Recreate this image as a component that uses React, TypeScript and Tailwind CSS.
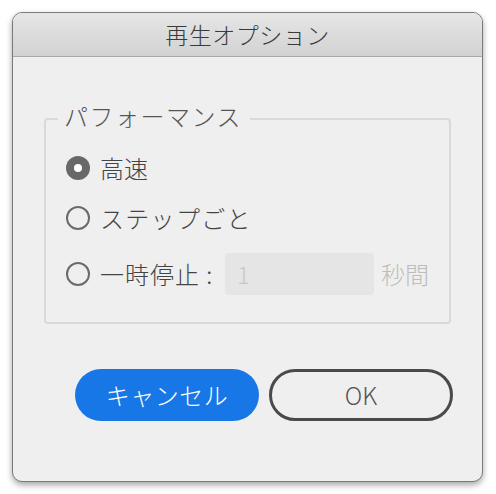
const font = { fontFamily: '"Noto Sans CJK JP", "Noto Sans", sans-serif' }

function Radio({ checked }: { checked?: boolean }) {
  if (checked) {
    return (
      <span className="flex h-[24px] w-[24px] shrink-0 items-center justify-center rounded-full bg-[#686868]">
        <span className="h-[8px] w-[8px] rounded-full bg-white" />
      </span>
    )
  }
  return <span className="h-[24px] w-[24px] shrink-0 rounded-full border-2 border-[#6a6a6a]" />
}

export default function App() {
  return (
    <div className="h-[494px] w-[496px] bg-white p-[12px] pr-[13px] font-light" style={font}>
      <div className="flex h-[470px] w-[471px] flex-col overflow-hidden rounded-[10px] border border-[#7a7a7a] bg-[#efefef] shadow-[0_3px_6px_rgba(0,0,0,0.35)]">
        <header className="flex h-[44px] shrink-0 items-center justify-center border-b border-[#a9a9a9] bg-gradient-to-b from-[#e6e6e6] to-[#d2d2d2]">
          <h1 className="text-[23px] leading-none tracking-[0.5px] text-[#3a3a3a]">再生オプション</h1>
        </header>

        <fieldset className="mx-[31px] mt-[48px] h-[219px] rounded-[4px] border-2 border-[#d9d9d9] px-[20px] pt-0">
          <legend className="-ml-[8px] -translate-y-[3px] pl-[6px] pr-[8px] text-[24px] leading-[28px] tracking-[1.5px] text-[#555]">パフォーマンス</legend>
          <div className="mt-[20px] flex h-[30px] items-center gap-[10px]">
            <Radio checked />
            <span className="text-[24px] text-[#444]">高速</span>
          </div>
          <div className="mt-[20px] flex h-[30px] items-center gap-[10px]">
            <Radio />
            <span className="text-[24px] tracking-[1.3px] text-[#444]">ステップごと</span>
          </div>
          <div className="mt-[20px] flex h-[42px] items-center">
            <Radio />
            <span className="ml-[10px] w-[117px] whitespace-nowrap text-[24px] tracking-[1px] text-[#444]">一時停止 :</span>
            <span className="ml-[8px] flex h-[42px] w-[149px] items-center rounded-[4px] bg-[#e5e5e5] px-[12px] text-[24px] text-[#c8c8c8]">1</span>
            <span className="ml-[7px] text-[24px] text-[#bdbdbd]">秒間</span>
          </div>
        </fieldset>

        <div className="mt-[45px] flex gap-[10px] pl-[62px]">
          <button className="h-[52px] w-[184px] rounded-full bg-[#1877e6] text-[24px] tracking-[0.5px] text-white">キャンセル</button>
          <button className="h-[52px] w-[184px] rounded-full border-[3px] border-[#4a4a4a] text-[24px] text-[#555]">OK</button>
        </div>
      </div>
    </div>
  )
}
